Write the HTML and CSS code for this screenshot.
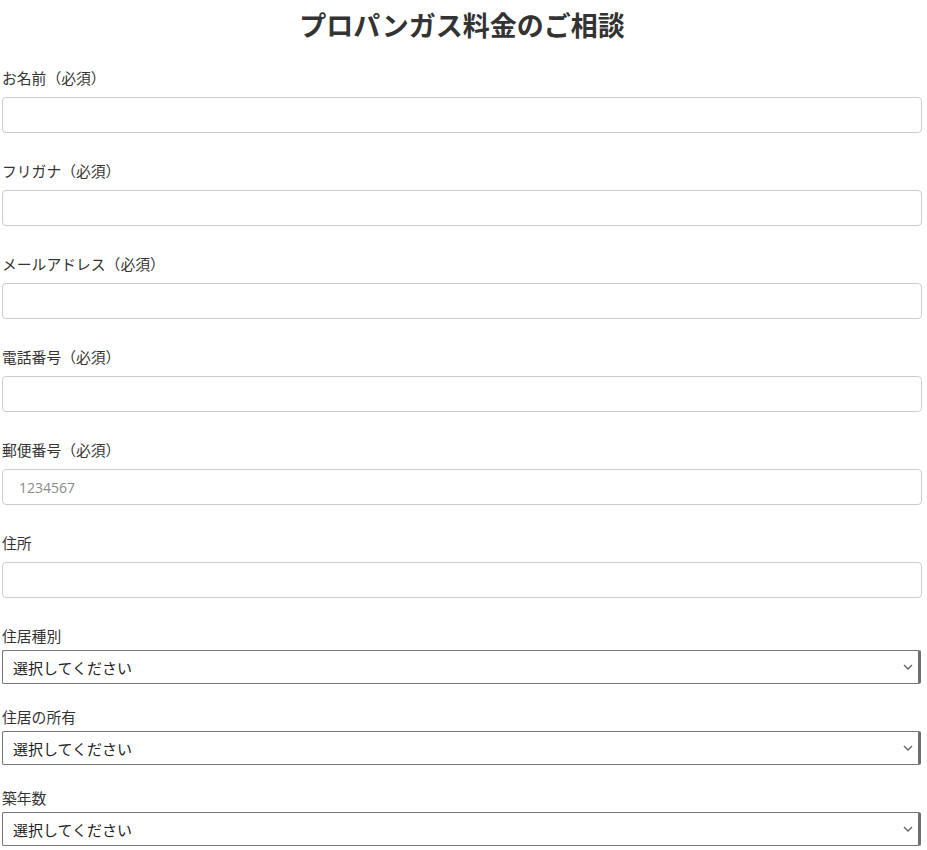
FILE: index.html
```html
<!DOCTYPE html>
<html lang="ja">
	<head>
		<meta charset="utf-8">
		<meta name="viewport" content="width=device-width, initial-scale=1">
		<title>プロパンガス料金のご相談</title>
		<link rel="stylesheet" href="styles.css">
	</head>
	<body>
		<div class="contact">
			<h2 class="title">プロパンガス料金のご相談</h2>
			<form class="contact-form" onsubmit="return false;">
				<div class="field">
					<label for="name">お名前（必須）</label>
					<input type="text" id="name" class="text-input">
				</div>
				<div class="field">
					<label for="kana">フリガナ（必須）</label>
					<input type="text" id="kana" class="text-input">
				</div>
				<div class="field">
					<label for="email">メールアドレス（必須）</label>
					<input type="email" id="email" class="text-input">
				</div>
				<div class="field">
					<label for="tel">電話番号（必須）</label>
					<input type="tel" id="tel" class="text-input">
				</div>
				<div class="field">
					<label for="zip">郵便番号（必須）</label>
					<input type="text" id="zip" class="text-input" placeholder="1234567">
				</div>
				<div class="field">
					<label for="address">住所</label>
					<input type="text" id="address" class="text-input">
				</div>
				<div class="field field-select">
					<label for="house_type">住居種別</label>
					<div class="select-wrap">
						<select id="house_type" class="select">
							<option>選択してください</option>
							<option>戸建て</option>
							<option>集合住宅</option>
						</select>
						<svg class="chevron" width="10" height="6" viewBox="0 0 10 6"><path d="M1 1l4 4 4-4" fill="none" stroke="#666" stroke-width="1.4"/></svg>
					</div>
				</div>
				<div class="field field-select">
					<label for="owner">住居の所有</label>
					<div class="select-wrap">
						<select id="owner" class="select">
							<option>選択してください</option>
							<option>持ち家</option>
							<option>賃貸</option>
						</select>
						<svg class="chevron" width="10" height="6" viewBox="0 0 10 6"><path d="M1 1l4 4 4-4" fill="none" stroke="#666" stroke-width="1.4"/></svg>
					</div>
				</div>
				<div class="field field-select">
					<label for="age">築年数</label>
					<div class="select-wrap">
						<select id="age" class="select">
							<option>選択してください</option>
							<option>10年未満</option>
							<option>10年以上</option>
						</select>
						<svg class="chevron" width="10" height="6" viewBox="0 0 10 6"><path d="M1 1l4 4 4-4" fill="none" stroke="#666" stroke-width="1.4"/></svg>
					</div>
				</div>
			</form>
		</div>
	</body>
</html>
```
FILE: styles.css
```css
body {
	margin: 0;
	background-color: #FFFFFF;
	color: #333333;
	font-family: "Noto Sans CJK JP", "Noto Sans", sans-serif;
}

.contact {
	width: 920px;
	margin-left: 2px;
}

.title {
	margin: 10px 0 28px;
	font-size: 27px;
	line-height: 30px;
	font-weight: bold;
	text-align: center;
	color: #333333;
}

.field {
	display: flex;
	flex-direction: column;
	margin-bottom: 28px;
}

.field label {
	font-size: 14.8px;
	line-height: 20px;
	margin-bottom: 9px;
}

.text-input {
	box-sizing: border-box;
	height: 36px;
	width: 100%;
	margin: 0;
	padding: 0 16px;
	border: 1px solid #CCCCCC;
	border-radius: 4px;
	font-family: "Open Sans", "Noto Sans CJK JP", sans-serif;
	font-size: 14px;
	color: #333333;
}

.text-input::placeholder {
	color: #8A8A8A;
}

.field-select {
	margin-bottom: 23px;
}

.field-select label {
	margin-bottom: 4px;
}

.select-wrap {
	position: relative;
}

.select {
	box-sizing: border-box;
	appearance: none;
	-webkit-appearance: none;
	height: 34px;
	width: 919px;
	margin: 0;
	padding: 0 10px;
	border: 1px solid #767676;
	border-right: 3px solid #6E6E6E;
	border-radius: 2px;
	background-color: #FFFFFF;
	font-family: "Noto Sans CJK JP", sans-serif;
	font-size: 15px;
	color: #222222;
}

.chevron {
	position: absolute;
	right: 9px;
	top: 14px;
	pointer-events: none;
}
```
